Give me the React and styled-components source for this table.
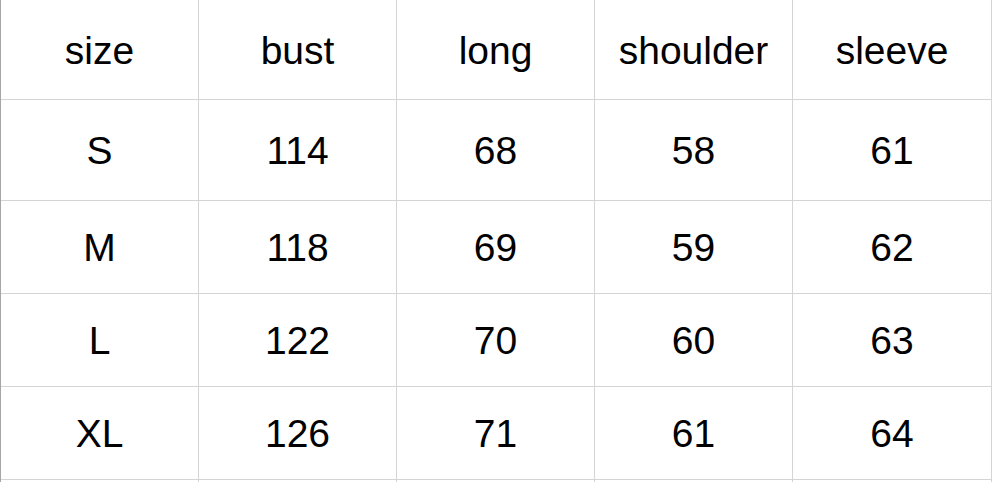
import React from "react";
import styled, { createGlobalStyle } from "styled-components";

const Global = createGlobalStyle`
  html, body { margin: 0; padding: 0; background: #ffffff; overflow: hidden; }
  body { font-family: "Liberation Sans", Arial, sans-serif; }
`;

const Sheet = styled.div`
  display: grid;
  grid-template-columns: 198px 198px 198px 198px 199px;
  border-left: 1px solid #a6a6a6;
  width: max-content;
`;

const Cell = styled.div`
  height: ${(p) => p.$h}px;
  box-sizing: border-box;
  border-right: 1px solid #d4d4d4;
  border-bottom: ${(p) => (p.$open ? "none" : "1px solid #d4d4d4")};
  display: flex;
  align-items: center;
  justify-content: center;
  padding-top: 1px;
  font-size: 39px;
  color: #000000;
  line-height: 1;
`;

const header = ["size", "bust", "long", "shoulder", "sleeve"];
const rows = [
  ["S", "114", "68", "58", "61"],
  ["M", "118", "69", "59", "62"],
  ["L", "122", "70", "60", "63"],
  ["XL", "126", "71", "61", "64"],
];
const heights = [101, 93, 93, 93];

export default function App() {
  return (
    <>
      <Global />
      <Sheet>
        {header.map((h) => (
          <Cell key={h} $h={100}>{h}</Cell>
        ))}
        {rows.map((r, i) =>
          r.map((v, j) => (
            <Cell key={`${i}-${j}`} $h={heights[i]}>{v}</Cell>
          ))
        )}
        {header.map((h) => (
          <Cell key={`e-${h}`} $h={2} $open />
        ))}
      </Sheet>
    </>
  );
}
